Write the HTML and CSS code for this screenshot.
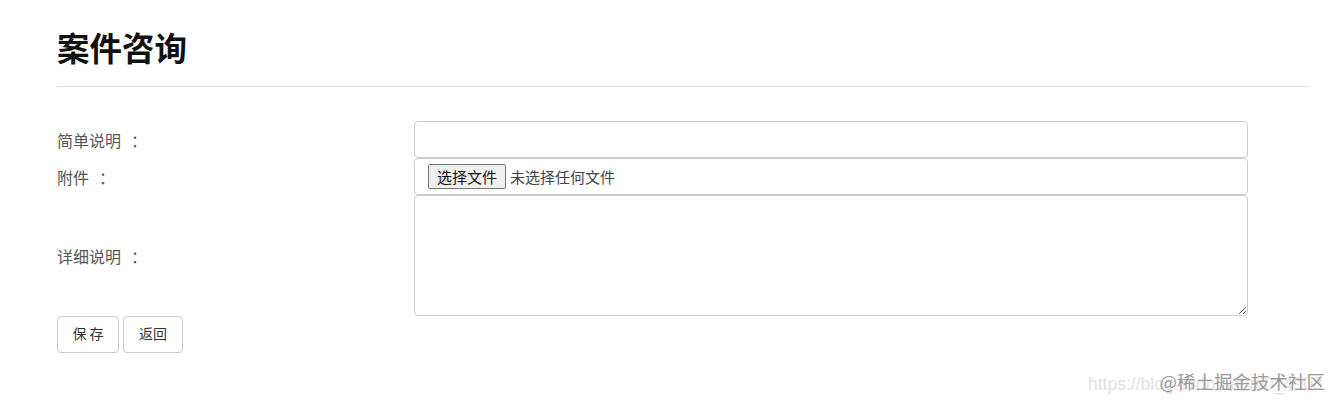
FILE: index.html
```html
<!DOCTYPE html>
<html lang="zh-CN">
<head>
<meta charset="utf-8">
<title>案件咨询</title>
<link rel="stylesheet" href="styles.css">
</head>
<body>
<div class="page">
  <h1 class="title">案件咨询</h1>
  <hr class="rule">
  <form class="form">
    <label class="label">简单说明<span class="colon">：</span></label>
    <input class="control" type="text">
    <label class="label">附件<span class="colon">：</span></label>
    <div class="control file">
      <span class="file-btn">选择文件</span>
      <span class="file-text">未选择任何文件</span>
    </div>
    <label class="label">详细说明<span class="colon">：</span></label>
    <textarea class="control area"></textarea>
  </form>
  <div class="actions">
    <button class="btn btn-save" type="button">保 存</button>
    <button class="btn btn-back" type="button">返回</button>
  </div>
</div>
<div class="watermark">
  <span class="wm-url">https://blog.csdn.net/m0_4908</span>
  <span class="wm-brand">@稀土掘金技术社区</span>
</div>
</body>
</html>
```

FILE: styles.css
```css
* { box-sizing: border-box; }
html, body {
  margin: 0;
  padding: 0;
  background: #fff;
  font-family: "Noto Sans CJK SC", "Liberation Sans", sans-serif;
  color: #333;
}
.page {
  padding: 24px 28px 0 57px;
}
.title {
  margin: 0;
  font-size: 32.5px;
  line-height: 46px;
  font-weight: 700;
  color: #111;
}
.rule {
  margin: 16px 0 0 0;
  border: 0;
  border-top: 1px solid #e3e3e3;
  height: 0;
}
.form {
  margin-top: 34px;
  display: grid;
  grid-template-columns: 357px 834px;
  align-items: center;
}
.label {
  font-size: 16px;
  color: #555;
  line-height: 22px;
}
.colon {
  margin-left: 10px;
}
.control {
  display: block;
  width: 834px;
  height: 37px;
  margin: 0;
  border: 1px solid #ccc;
  border-radius: 4px;
  background: #fff;
  font-family: inherit;
  font-size: 14px;
  padding: 6px 12px;
}
.file {
  display: flex;
  align-items: center;
  gap: 4px;
  padding: 0 13px;
}
.file-btn {
  display: inline-flex;
  align-items: center;
  height: 25px;
  padding: 0 8px;
  border: 1px solid #767676;
  border-radius: 2px;
  background: #efefef;
  font-size: 15px;
  color: #111;
}
.file-text {
  font-size: 15px;
  color: #444;
}
.area {
  height: 121px;
  resize: vertical;
}
.actions {
  display: flex;
  gap: 4px;
}
.btn {
  height: 37px;
  padding: 0 0 3px 0;
  border: 1px solid #ccc;
  border-radius: 4px;
  background: #fff;
  font-family: inherit;
  font-size: 14px;
  color: #333;
}
.btn-save { width: 62px; }
.btn-back { width: 60px; }
.watermark {
  position: absolute;
  left: 1088px;
  top: 368px;
  height: 34px;
  width: 245px;
}
.wm-url {
  position: absolute;
  left: 0;
  top: 6px;
  font-family: "Liberation Sans", sans-serif;
  font-size: 17.5px;
  color: #e2e2e2;
  white-space: nowrap;
}
.wm-brand {
  position: absolute;
  right: 8px;
  top: 0;
  font-size: 18.5px;
  color: #9a9a9a;
  white-space: nowrap;
}
```
